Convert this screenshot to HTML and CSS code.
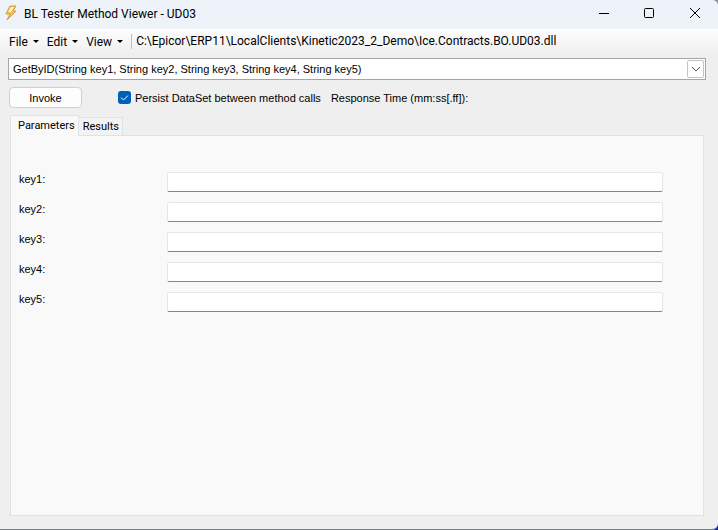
FILE: index.html
```html
<!DOCTYPE html>
<html lang="en">
<head>
<meta charset="utf-8">
<title>BL Tester Method Viewer - UD03</title>
<link rel="stylesheet" href="styles.css">
</head>
<body>
<main class="window">
  <header class="titlebar">
    <svg class="app-icon" width="16" height="16" viewBox="0 0 16 16" aria-hidden="true">
      <path d="M6 1H12L9 6H12L3 15L6 9H2Z" fill="#f6c34c" stroke="#d09a50"/>
      <path d="M7 2H10L7 7H4Z" fill="#fff3c8"/>
    </svg>
    <h1 class="title">BL Tester Method Viewer - UD03</h1>
    <div class="controls">
      <button class="control" aria-label="Minimize"><svg width="12" height="12" viewBox="0 0 12 12"><path d="M2 6.500H12" stroke="#000"/></svg></button>
      <button class="control" aria-label="Maximize"><svg width="12" height="12" viewBox="0 0 12 12"><rect x="1.500" y="1.500" width="9" height="9" rx="1" fill="none" stroke="#000"/></svg></button>
      <button class="control" aria-label="Close"><svg width="12" height="12" viewBox="0 0 12 12"><path d="M1 1L11 11M11 1L1 11" stroke="#000"/></svg></button>
    </div>
  </header>
  <nav class="toolbar">
    <button class="menu">File<span class="caret"></span></button>
    <button class="menu">Edit<span class="caret"></span></button>
    <button class="menu">View<span class="caret"></span></button>
    <span class="path">C:\Epicor\ERP11\LocalClients\Kinetic2023_2_Demo\Ice.Contracts.BO.UD03.dll</span>
  </nav>
  <div class="content">
    <div class="combo">
      <select class="method" aria-label="Method">
        <option>GetByID(String key1, String key2, String key3, String key4, String key5)</option>
      </select>
      <span class="drop"><svg width="10" height="6" viewBox="0 0 10 6"><path d="M1 1L5 5L9 1" fill="none" stroke="#555"/></svg></span>
    </div>
    <div class="actions">
      <button class="invoke">Invoke</button>
      <label class="persist">
        <input class="check" type="checkbox" checked>
        <svg class="tick" width="13" height="13" viewBox="0 0 13 13" aria-hidden="true"><path d="M3 6.500L5.500 9L10 4.500" fill="none" stroke="#fff"/></svg>
        Persist DataSet between method calls
      </label>
      <span>Response Time (mm:ss[.ff]):</span>
    </div>
    <div class="tabs" role="tablist">
      <button class="tab tab-active" role="tab" aria-selected="true">Parameters</button>
      <button class="tab" role="tab" aria-selected="false">Results</button>
    </div>
    <form class="panel">
      <div class="row"><label for="key1">key1:</label><input class="field" id="key1" type="text"></div>
      <div class="row"><label for="key2">key2:</label><input class="field" id="key2" type="text"></div>
      <div class="row"><label for="key3">key3:</label><input class="field" id="key3" type="text"></div>
      <div class="row"><label for="key4">key4:</label><input class="field" id="key4" type="text"></div>
      <div class="row"><label for="key5">key5:</label><input class="field" id="key5" type="text"></div>
    </form>
  </div>
</main>
</body>
</html>
```
FILE: styles.css
```css
* { box-sizing: border-box; }

body {
  margin: 0;
  background: linear-gradient(#8198ac, #10259a);
  color: #000;
  font: 11px/14px "Liberation Sans", Arial, sans-serif;
}

button, input, select {
  margin: 0;
  font: inherit;
  color: inherit;
}

.window {
  display: flex;
  flex-direction: column;
  min-height: 100vh;
  overflow: hidden;
  border-bottom: 1px solid #718089;
  border-radius: 0 6px 6px 0;
  background: #efefef;
}

.titlebar {
  display: flex;
  align-items: center;
  height: 29px;
  padding-left: 4px;
  background: #eef3fa;
}

.app-icon { margin-bottom: 3px; }

.title {
  flex: 1;
  margin: 0 0 2px 4px;
  font: 12px/16px Roboto, sans-serif;
}

.controls { display: flex; }

.control {
  display: flex;
  align-items: center;
  justify-content: center;
  width: 46px;
  height: 29px;
  padding: 0 0 3px;
  border: 0;
  background: none;
}

.toolbar {
  display: flex;
  align-items: center;
  height: 25px;
  padding-left: 9px;
  background: linear-gradient(#fdfdfd, #efefef);
  font: 12px/16px Roboto, sans-serif;
}

.menu {
  display: flex;
  align-items: center;
  gap: 5px;
  padding: 0;
  margin-right: 8px;
  border: 0;
  background: none;
}

.caret {
  border: 3px solid transparent;
  border-top-color: #000;
  border-bottom: 0;
}

.path {
  padding-left: 4px;
  border-left: 1px solid #bdbdbd;
  line-height: 15px;
  white-space: nowrap;
}

.content {
  display: flex;
  flex: 1;
  flex-direction: column;
  padding: 4px 14px 13px 10px;
}

.combo {
  position: relative;
  display: flex;
  margin: 0 -2px;
}

.method {
  appearance: none;
  width: 100%;
  height: 22px;
  padding: 0 24px 0 4px;
  border: 1px solid #a3a6a9;
  border-radius: 0;
  background: #fff;
}

.drop {
  position: absolute;
  top: 2px;
  right: 2px;
  bottom: 2px;
  display: flex;
  align-items: center;
  justify-content: center;
  width: 17px;
  border: 1px solid #c4c4c4;
  border-radius: 2px;
  background: #fff;
  pointer-events: none;
}

.actions {
  display: flex;
  align-items: center;
  gap: 10px;
  margin-top: 7px;
}

.invoke {
  width: 73px;
  height: 21px;
  margin: 0 26px 0 -1px;
  padding: 0;
  border: 1px solid #cfcfcf;
  border-radius: 4px;
  background: #fdfdfd;
}

.persist {
  position: relative;
  display: flex;
  align-items: center;
  gap: 4px;
}

.check {
  appearance: none;
  width: 13px;
  height: 13px;
  border-radius: 3px;
  background: #005fb8;
}

.tick {
  position: absolute;
  left: 0;
  visibility: hidden;
}

.check:checked + .tick { visibility: visible; }

.tabs {
  display: flex;
  align-items: flex-end;
  margin-top: 7px;
  font-family: Roboto, sans-serif;
}

.tab {
  height: 18px;
  padding: 0 3px 0 4px;
  border: 1px solid #e2e2e2;
  border-width: 1px 1px 0 0;
  background: #f3f3f3;
}

.tab-active {
  height: 21px;
  margin-bottom: -1px;
  padding: 0 3px 0 7px;
  border-left-width: 1px;
  background: #f9f9f9;
  z-index: 1;
}

.panel {
  flex: 1;
  padding: 36px 40px 36px 8px;
  border: 1px solid #e2e2e2;
  background: #f9f9f9;
}

.row {
  display: grid;
  grid-template-columns: 148px 1fr;
  margin-bottom: 10px;
}

.field {
  width: 100%;
  height: 20px;
  padding: 0 4px;
  border: 1px solid #e6e6e6;
  border-bottom-color: #858585;
  border-radius: 2px;
  background: #fff;
}
```
